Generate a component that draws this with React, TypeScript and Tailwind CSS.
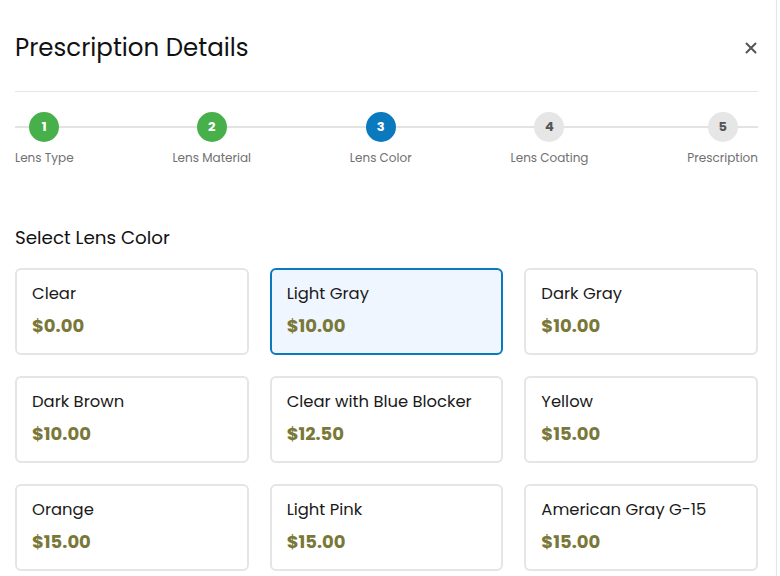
import React from 'react';

const steps = [
  { n: 1, label: 'Lens Type', state: 'done' },
  { n: 2, label: 'Lens Material', state: 'done' },
  { n: 3, label: 'Lens Color', state: 'active' },
  { n: 4, label: 'Lens Coating', state: 'todo' },
  { n: 5, label: 'Prescription', state: 'todo' },
];

const colors = [
  { name: 'Clear', price: '$0.00' },
  { name: 'Light Gray', price: '$10.00', selected: true },
  { name: 'Dark Gray', price: '$10.00' },
  { name: 'Dark Brown', price: '$10.00' },
  { name: 'Clear with Blue Blocker', price: '$12.50' },
  { name: 'Yellow', price: '$15.00' },
  { name: 'Orange', price: '$15.00' },
  { name: 'Light Pink', price: '$15.00' },
  { name: 'American Gray G-15', price: '$15.00' },
];

export default function App() {
  return (
    <div
      className="w-[780px] h-[576px] overflow-hidden bg-white flex"
      style={{ fontFamily: 'Poppins, Inter, "Noto Sans", sans-serif' }}
    >
      <div className="flex-1 pl-[15px] pr-[18px]">
        {/* Header */}
        <div className="flex items-center justify-between pt-[31px] pb-[26px] border-b border-[#e5e5e5]">
          <h2 className="text-[24.5px] leading-[34px] text-[#111] font-normal">Prescription Details</h2>
          <button className="w-[16px] h-[16px] -mr-[1px] flex items-center justify-center text-[#555]">
            <svg width="12" height="12" viewBox="0 0 12 12">
              <path d="M1.5 1.5 L10.5 10.5 M10.5 1.5 L1.5 10.5" stroke="currentColor" strokeWidth="2" strokeLinecap="round" />
            </svg>
          </button>
        </div>

        {/* Stepper */}
        <div className="relative mt-[20px] flex justify-between">
          <div className="absolute left-0 right-0 top-[14px] h-[2px] bg-[#e3e3e3]" />
          {steps.map((s) => (
            <div key={s.n} className="relative flex flex-col items-center">
              <div
                className={
                  s.state === 'done'
                    ? 'w-[30px] h-[30px] rounded-full bg-[#47b04b] text-white flex items-center justify-center text-[13px] font-bold'
                    : s.state === 'active'
                    ? 'w-[30px] h-[30px] rounded-full bg-[#0a79bd] text-white flex items-center justify-center text-[13px] font-bold'
                    : 'w-[30px] h-[30px] rounded-full bg-[#e6e6e6] text-[#555] flex items-center justify-center text-[13px] font-bold'
                }
              >
                {s.n}
              </div>
              <span className="mt-[8px] text-[12px] leading-[16px] text-[#707070]">{s.label}</span>
            </div>
          ))}
        </div>

        {/* Lens colors */}
        <h3 className="mt-[60px] text-[18.3px] leading-[24px] text-[#111]">Select Lens Color</h3>
        <div className="mt-[18px] grid grid-cols-3 gap-[21px]">
          {colors.map((c) => (
            <div
              key={c.name}
              className={
                c.selected
                  ? 'h-[87px] rounded-[6px] border-2 border-[#0a79bd] bg-[#eff6ff] pl-[15px] pt-[12px]'
                  : 'h-[87px] rounded-[6px] border-2 border-[#e5e5e5] bg-white pl-[15px] pt-[12px]'
              }
            >
              <div className="text-[16.4px] leading-[24px] text-[#1a1a1a]">{c.name}</div>
              <div className="mt-[8px] text-[18px] leading-[24px] font-bold text-[#7a7838]">{c.price}</div>
            </div>
          ))}
        </div>
      </div>
      <div className="w-[4px] border-l border-[#e8e8e8] bg-white" />
    </div>
  );
}
